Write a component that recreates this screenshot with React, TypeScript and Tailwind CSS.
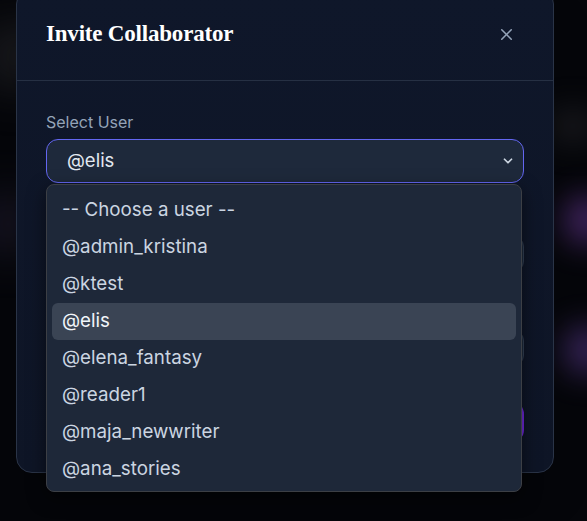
import { X, ChevronDown } from "lucide-react";

const users = [
  "-- Choose a user --",
  "@admin_kristina",
  "@ktest",
  "@elis",
  "@elena_fantasy",
  "@reader1",
  "@maja_newwriter",
  "@ana_stories",
];

export default function App() {
  return (
    <div
      className="relative w-[587px] h-[521px] overflow-hidden bg-[#05060a]"
      style={{ fontFamily: "Inter, 'Noto Sans', sans-serif" }}
    >
      {/* blurred background glows */}
      <div className="absolute -left-4 top-6 w-16 h-16 rounded-full bg-[#2a2a2e] blur-xl opacity-70" />
      <div className="absolute -left-6 top-[200px] w-16 h-12 rounded-full bg-[#2c2540] blur-xl opacity-60" />
      <div className="absolute right-[-24px] top-[196px] w-12 h-12 rounded-full bg-[#4b2a6e] blur-lg opacity-90" />
      <div className="absolute right-[-24px] top-[326px] w-12 h-12 rounded-full bg-[#3f2a66] blur-lg opacity-90" />
      <div className="absolute right-[-10px] top-[110px] w-12 h-8 rounded-full bg-[#2a2a2e] blur-lg opacity-60" />

      {/* modal */}
      <div className="absolute left-4 top-[-12px] w-[538px] h-[485px] rounded-2xl border border-[#2a3447] bg-gradient-to-b from-[#0f172a] to-[#0e1526] shadow-2xl flex flex-col">
        <div className="h-[92px] px-[29px] flex items-center justify-between border-b border-[#263043]">
          <h2
            className="text-[23px] font-bold text-white tracking-[-0.2px]"
            style={{ fontFamily: "'Liberation Serif', 'DejaVu Serif', serif" }}
          >
            Invite Collaborator
          </h2>
          <X size={19} strokeWidth={2} className="text-[#94a3b8] mr-[8px]" />
        </div>

        <div className="px-[29px] pt-[31px] flex flex-col">
          <label className="text-[16px] text-[#94a3b8] leading-5">Select User</label>
          <div className="mt-[7px] h-[44px] rounded-xl border border-[#6366f1] bg-[#1e293b] flex items-center justify-between pl-5 pr-2">
            <span className="text-[18.5px] text-[#e2e8f0]">@elis</span>
            <ChevronDown size={14} strokeWidth={3} className="text-[#cbd5e1]" />
          </div>

          {/* fields hidden behind the open list */}
          <div className="mt-[52px] h-[38px] rounded-xl border border-[#334155] bg-[#1e293b]" />
          <div className="mt-[56px] h-[38px] rounded-xl border border-[#334155] bg-[#1e293b]" />

          <div className="mt-[35px] flex justify-end gap-3">
            <div className="h-[40px] w-[96px] rounded-xl bg-[#1e293b]" />
            <div className="h-[40px] w-[150px] rounded-xl bg-[#6d28d9]" />
          </div>
        </div>
      </div>

      {/* native select dropdown list */}
      <div className="absolute left-[46px] top-[184px] w-[476px] h-[308px] rounded-lg border border-[#3c3f45] bg-[#1e2839] shadow-[0_6px_18px_rgba(0,0,0,0.5)] px-[5px] pt-[7px] flex flex-col">
        {users.map((u) => (
          <div
            key={u}
            className={
              "h-[37px] shrink-0 flex items-center pl-[10px] rounded-md text-[18.75px] " +
              (u === "@elis" ? "bg-[#3a4454] text-[#f1f5f9]" : "text-[#cbd5e1]")
            }
          >
            {u}
          </div>
        ))}
      </div>
    </div>
  );
}
